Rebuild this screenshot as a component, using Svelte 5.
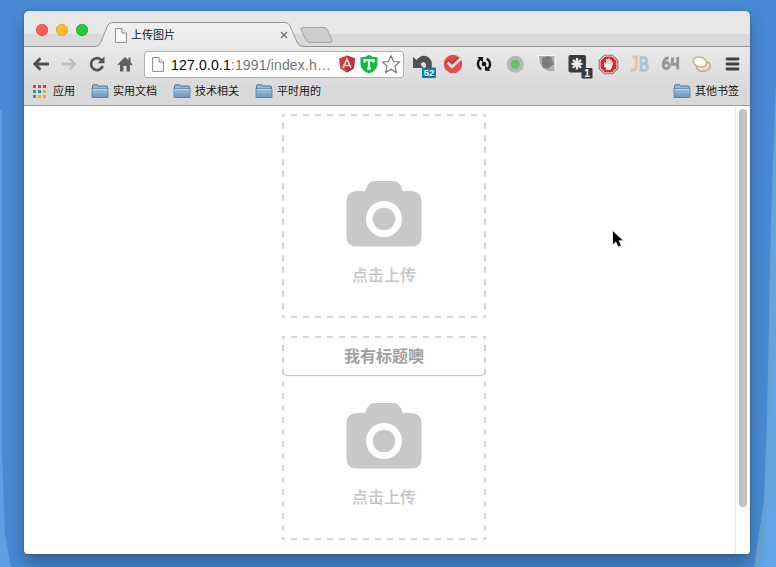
<script>
  const bookmarks = ['实用文档', '技术相关', '平时用的'];
  const apps = ['#ee3b32', '#ee3b32', '#ee3b32', '#2ea35a', '#2e86f0', '#f5ab0c', '#2ea35a', '#f5ab0c', '#f5ab0c'];
  const uploads = [{ title: '' }, { title: '我有标题噢' }];
</script>

{#snippet folder()}
  <svg class="folder" width="18" height="15" viewBox="0 0 18 15">
    <defs>
      <linearGradient id="fold" x1="0" y1="0" x2="0" y2="1">
        <stop offset="0" stop-color="#a2c5df" /><stop offset="1" stop-color="#6596bf" />
      </linearGradient>
    </defs>
    <path d="M1.5 13V2.2Q1.5 .7 3 .7H6.3Q7 .7 7.4 2H15.5Q16.5 2 16.5 3V13Z" fill="#93b8d4" stroke="#56758e" />
    <path d="M1 4.5H17V13.5H1Z" fill="url(#fold)" stroke="#55809f" stroke-width=".8" />
    <path d="M2 5.4H16" stroke="#bed8e9" />
  </svg>
{/snippet}

{#snippet page()}
  <svg class="page" width="12" height="15" viewBox="0 0 12 15">
    <path d="M.6 .6H7L11.4 5V14.4H.6Z" fill="#fbfbfb" stroke="#8b8b8b" />
    <path d="M7 .6V5H11.4" fill="#eee" stroke="#8b8b8b" />
  </svg>
{/snippet}

<div class="desktop">
  <svg class="wall" width="776" height="567" viewBox="0 0 776 567">
    <path d="M0 110H2V450L5 535L11 567H0Z" fill="#5d9fe3" />
    <path d="M776 80L771 220L767 420L764 500L754 567H776Z" fill="#69a2d4" />
    <path d="M776 330L769 430L769 500L759 567H776Z" fill="#62a6e8" />
  </svg>
  <div class="window">
    <div class="strip">
      <svg class="tabs" width="726" height="37" viewBox="0 0 726 37">
        <defs>
          <linearGradient id="tab" x1="0" y1="0" x2="0" y2="1">
            <stop offset="0" stop-color="#f1f1f1" /><stop offset="1" stop-color="#e9e9e9" />
          </linearGradient>
        </defs>
        <path d="M0 35.5H71Q75 35.5 76.5 32L83 16Q84.5 11.5 88 11.5H261Q264.5 11.5 266 15L273 31Q275 35.5 279 35.5H726V37H0Z" fill="url(#tab)" />
        <path d="M0 35.5H71Q75 35.5 76.5 32L83 16Q84.5 11.5 88 11.5H261Q264.5 11.5 266 15L273 31Q275 35.5 279 35.5H726" fill="none" stroke="#969696" />
        <path d="M279 16.5H300Q302.5 16.5 303.5 19L308 29Q309 31.5 306 31.5H286Q283 31.5 281.5 28L277 19Q276 16.5 279 16.5Z" fill="#cdcdcd" stroke="#a4a4a4" />
        <g stroke-width=".8">
          <circle cx="18" cy="19" r="5.7" fill="#fc5b57" stroke="#df4744" />
          <circle cx="38" cy="19" r="5.7" fill="#fdbc2e" stroke="#dea032" />
          <circle cx="58" cy="19" r="5.7" fill="#28c840" stroke="#1fab2f" />
        </g>
      </svg>
      <div class="tab">
        {@render page()}
        <span>上传图片</span>
        <svg class="close" width="8" height="8" viewBox="0 0 8 8"><path d="M1 1L7 7M7 1L1 7" stroke="#777" stroke-width="1.5" /></svg>
      </div>
    </div>

    <div class="toolbar">
      <div class="nav">
        <svg viewBox="0 0 28 28"><path d="M22 14H8M13.5 8.3L7.8 14L13.5 19.7" fill="none" stroke="#505050" stroke-width="2.8" /></svg>
        <svg viewBox="0 0 28 28"><path d="M7 14H20M14.5 8.5L20 14L14.5 19.5" fill="none" stroke="#bcbcbc" stroke-width="2.3" /></svg>
        <svg viewBox="0 0 28 28"><path d="M18.7 10.3A6 6 0 1 0 19.7 16" fill="none" stroke="#555" stroke-width="2.7" /><path d="M21.5 6.500V13.300H14.700Z" fill="#555" /></svg>
        <svg viewBox="0 0 28 28"><path d="M14 7L6.500 14.500L7.500 15.500L9 14.500V21.500H12.500V16H15.500V21.500H19V14.500L20.500 15.500L21.500 14.500L19.500 12V7.500H17.500V10.200Z" fill="#606060" /></svg>
      </div>
      <div class="address">
        {@render page()}
        <div class="url">127.0.0.1<span>:1991/index.h…</span></div>
        <svg class="badges" width="64" height="22" viewBox="0 0 64 22">
          <path d="M10 1.500L18 4.500L16.800 14.500L10 18.500L3.200 14.500L2 4.500Z" fill="#d63c43" />
          <path d="M10 1.500L18 4.500L16.800 14.500L10 18.500Z" fill="#b83038" />
          <path d="M6 14L10 5L14 14M7.500 11.500H12.500" fill="none" stroke="#e8dada" stroke-width="1.700" />
          <path d="M32 .8Q36 3.800 40.500 3.300V10.500Q40 16.500 32 19.500Q24 16.500 23.500 10.500V3.300Q28 3.800 32 .8Z" fill="#08bd38" />
          <path d="M27.500 8.500V6.200H36.500V8.500M32 6V14.700M30 14.700H34" fill="none" stroke="#fff" stroke-width="2.200" />
          <path d="M54 1.700L56.500 7.500L62.500 8L58 12.300L59.400 18.500L54 15.200L48.600 18.500L50 12.300L45.500 8L51.500 7.500Z" fill="#fff" stroke="#777" stroke-width="1.100" />
        </svg>
      </div>
      <div class="extensions">
        <svg viewBox="0 0 31 32">
          <path d="M6 8L9.500 11Q14 5.500 19 7Q26.500 9.500 24.500 20H18.500Q20 13.500 16.500 13L13.500 14.700L16 19H6Z" fill="#505050" />
          <rect x="15" y="18.500" width="14" height="10.500" rx="1" fill="#087cac" />
          <text x="22" y="27.200" text-anchor="middle" font-size="9.500" font-weight="700" fill="#fff">52</text>
        </svg>
        <svg viewBox="0 0 31 32"><circle cx="15" cy="15" r="9.300" fill="#e64b4d" /><path d="M9 12L14 17L21 10" fill="none" stroke="#c43b3e" stroke-width="5.500" /><path d="M9.500 13.500L14 18L23.500 9" fill="none" stroke="#f3dddd" stroke-width="3" /></svg>
        <svg viewBox="0 0 31 32"><path d="M12.500 9Q7.500 12 9.500 17.500L12 20.500M17.500 20.800Q22.500 18 20.500 12.500L18 9.500" fill="none" stroke="#141414" stroke-width="2.300" /><path d="M8.500 8H14V13.500ZM21.500 21.800H16V16Z" fill="#141414" /><circle cx="15" cy="15" r="2.300" fill="#141414" /></svg>
        <svg viewBox="0 0 31 32"><circle cx="15.300" cy="15.300" r="8.500" fill="#b7b7b7" /><circle cx="15.300" cy="15.300" r="4.500" fill="#5bc568" /></svg>
        <svg viewBox="0 0 31 32"><path d="M7 6.500H24V23Q8 25 7 6.500Z" fill="#b0b0b0" stroke="#f6f6f6" /><path d="M11 8H18V20L12 18Z" fill="#929292" /><path d="M11 10Q15 6 20 8L23 15L18 19Q12 20 11 16Z" fill="#757575" opacity=".8" /></svg>
        <svg viewBox="0 0 31 32">
          <rect x="6.500" y="6" width="17.500" height="17.500" rx="2" fill="#3c3c3c" />
          <path d="M15 9V20.500M9.500 14.800H20.500M11 10.800L19 18.800M19 10.800L11 18.800" stroke="#eee" stroke-width="2.200" />
          <rect x="19.500" y="19" width="11" height="10.500" rx="1" fill="#3b3b3b" />
          <text x="25" y="27.800" text-anchor="middle" font-size="10" font-weight="700" fill="#fff">1</text>
        </svg>
        <svg viewBox="0 0 31 32"><path d="M11.500 6.200H19.500L24.800 11.500V19.500L19.500 24.800H11.500L6.200 19.500V11.500Z" fill="#fff" stroke="#777" stroke-width="1.100" /><path d="M12 7.600H19L23.500 12V19L19 23.500H12L7.500 19V12Z" fill="#dd2920" /><path d="M12 14V17.500M14 10.700V17M16 10V17M18 11.500V18M19.500 14L17.500 19.500" stroke="#fff" stroke-width="1.500" stroke-linecap="round" /><path d="M11.500 15.500H19V18L17 21H13.500Z" fill="#fff" /></svg>
        <svg viewBox="0 0 31 32"><path d="M8.500 8H12.300V17.500Q12.300 21.500 6.500 21.500" fill="none" stroke="#e8c687" stroke-width="3" /><path d="M17 7V22M17 8.500H19Q22.500 8.500 22.500 11.500T19 14.500H17M19 14.500Q23.500 14.500 23.500 18T19 21.500H17" fill="none" stroke="#a9c9d9" stroke-width="2.900" /></svg>
        <svg viewBox="0 0 31 32"><path d="M13.500 8.800Q8.300 10 8.300 16.500M17.800 8.500L17 15.300H24M22.700 8V20.500" fill="none" stroke="#969696" stroke-width="3" /><circle cx="11.300" cy="16.700" r="3" fill="none" stroke="#969696" stroke-width="2.700" /></svg>
        <svg viewBox="0 0 31 32"><ellipse cx="17.500" cy="17.500" rx="7" ry="4.800" fill="#e8dfcf" stroke="#b9a583" stroke-width="1.300" transform="rotate(-12 17.500 17.500)" /><ellipse cx="14" cy="13" rx="7" ry="4.800" fill="#fbfaf6" stroke="#c3ae8d" stroke-width="1.300" transform="rotate(15 14 13)" /></svg>
        <svg viewBox="0 0 31 32"><path d="M10 10H21M10 15H21M10 20H21" stroke="#424242" stroke-width="2.800" stroke-linecap="round" /></svg>
      </div>
    </div>

    <div class="bookmarks">
      <div class="apps">{#each apps as color}<i style="background:{color}"></i>{/each}</div>
      <span class="label first">应用</span>
      {#each bookmarks as name}
        <div class="bookmark">{@render folder()}<span class="label">{name}</span></div>
      {/each}
      <div class="bookmark other">{@render folder()}<span class="label">其他书签</span></div>
    </div>

    <div class="content">
      <main>
        {#each uploads as item}
          <div class="upload">
            {#if item.title}<header>{item.title}</header>{/if}
            <div class="prompt">
              <svg class="camera" width="76" height="66" viewBox="0 0 76 66">
                <path fill-rule="evenodd" d="M10 10H19.500C20 6 23 0 29 0H47C53 0 56 6 56.500 10H66Q75.500 11 75.500 20V55.500Q75.500 65.500 65.500 65.500H10.500Q.5 65.500 .5 55.500V20Q.5 11 10 10ZM38 20A18 18 0 1 0 38 56A18 18 0 1 0 38 20Z" fill="#c8c8c8" />
                <circle cx="38" cy="38" r="11.300" fill="#c8c8c8" />
              </svg>
              <p>点击上传</p>
            </div>
          </div>
        {/each}
      </main>
      <div class="scrollbar"><div class="thumb"></div></div>
    </div>
  </div>
  <svg class="cursor" width="14" height="20" viewBox="0 0 14 20"><path d="M2 1.500V14L5 11.200L7.300 16.500L9.800 15.400L7.500 10.300H11.500Z" fill="#000" stroke="#ddd" stroke-width="1.600" paint-order="stroke" /></svg>
</div>

<style>
  :global(body) { margin: 0; overflow: hidden; }
  .desktop { position: relative; box-sizing: border-box; width: 776px; height: 567px; padding: 11px 26px 13px 24px; background: #4889d4; overflow: hidden; font-family: "Liberation Sans", "Noto Sans CJK SC", sans-serif; }
  .wall { position: absolute; inset: 0; }
  .window { position: relative; display: flex; flex-direction: column; height: 543px; border-radius: 5px 5px 4px 4px; background: #fff; box-shadow: 0 0 2px rgba(20, 45, 75, .55), 0 10px 15px rgba(35, 60, 85, .48); }
  .strip { position: relative; height: 36px; background: linear-gradient(#e7e7e7 0 23px, #d9d9d9 23px); border-radius: 5px 5px 0 0; flex: none; }
  .tabs { position: absolute; inset: 0; }
  .tab { position: relative; display: flex; align-items: center; height: 18px; width: 173px; padding: 15px 0 0 91px; font-size: 11px; color: #111; }
  .tab span { margin-left: 4px; flex: 1; line-height: 16px; padding-bottom: 1px; }
  .page { flex: none; }
  .toolbar { display: flex; height: 34px; flex: none; background: linear-gradient(#e9e9e9, #dcdcdc); border-top: 1px solid #fafafa; box-sizing: border-box; }
  .nav { display: flex; width: 117px; padding: 2px 0 0 3px; }
  .nav svg { width: 28px; height: 28px; flex: none; }
  .address { box-sizing: border-box; display: flex; align-items: center; width: 260px; height: 27px; margin-top: 3px; padding: 0 0 0 7px; border: 1px solid #afafaf; border-radius: 3px; background: #fff; flex: none; }
  .url { width: 162px; margin-left: 7px; font-size: 14px; letter-spacing: .16px; white-space: nowrap; color: #080808; }
  .url span { color: #757575; }
  .badges { flex: none; margin-left: 4px; }
  .extensions { display: flex; margin-left: 3px; padding-top: 1px; }
  .extensions svg { width: 31px; height: 32px; flex: none; font-family: "Liberation Sans", sans-serif; }
  .bookmarks { display: flex; align-items: center; box-sizing: border-box; height: 25px; padding: 0 11px 3px 9px; flex: none; background: linear-gradient(#dcdcdc, #d9d9d9 8px); border-bottom: 1px solid #a0a0a0; font-size: 11px; color: #151515; white-space: nowrap; }
  .label { line-height: 16px; padding-bottom: 1px; }
  .apps { display: grid; grid-template-columns: repeat(3, 3px); gap: 2px; }
  .apps i { width: 3px; height: 3px; }
  .first { width: 22px; margin-left: 7px; }
  .bookmark { display: flex; align-items: center; gap: 4px; margin-left: 16px; }
  .other { margin-left: auto; }
  .folder { flex: none; }
  .content { display: flex; flex: 1; min-height: 0; }
  main { display: flex; flex-direction: column; align-items: center; gap: 18px; box-sizing: border-box; width: 711px; padding: 8px 0 0 9px; }
  .upload { display: flex; flex-direction: column; box-sizing: border-box; width: 204px; height: 204px; padding: 2px;
    --h: repeating-linear-gradient(90deg, #d5d5d5 0 3px, transparent 3px 9px, #d5d5d5 9px 12px);
    --v: repeating-linear-gradient(#d5d5d5 0 3px, transparent 3px 9px, #d5d5d5 9px 12px);
    background: var(--h) top / 100% 2px no-repeat, var(--h) bottom / 100% 2px no-repeat, var(--v) left / 2px 100% no-repeat, var(--v) right / 2px 100% no-repeat; }
  header { box-sizing: border-box; height: 37px; border-radius: 2px; font-size: 16px; line-height: 38px; font-weight: 700; text-align: center; color: #a0a0a0; box-shadow: 0 1px 1px rgba(0, 0, 0, .25); margin-bottom: -37px; flex: none; }
  .prompt { display: flex; flex-direction: column; align-items: center; padding-top: 65px; }
  p { margin: 17px 0 0; font-size: 16px; line-height: 24px; font-weight: 500; color: #c6c6c6; }
  .scrollbar { box-sizing: border-box; width: 15px; padding: 3px 3px 0 3px; border-left: 1px solid #e7e7e7; background: #fdfdfd; border-radius: 0 0 4px 0; }
  .thumb { height: 398px; border-radius: 4px; background: #c3c3c3; }
  .cursor { position: absolute; left: 611px; top: 230px; }
</style>
